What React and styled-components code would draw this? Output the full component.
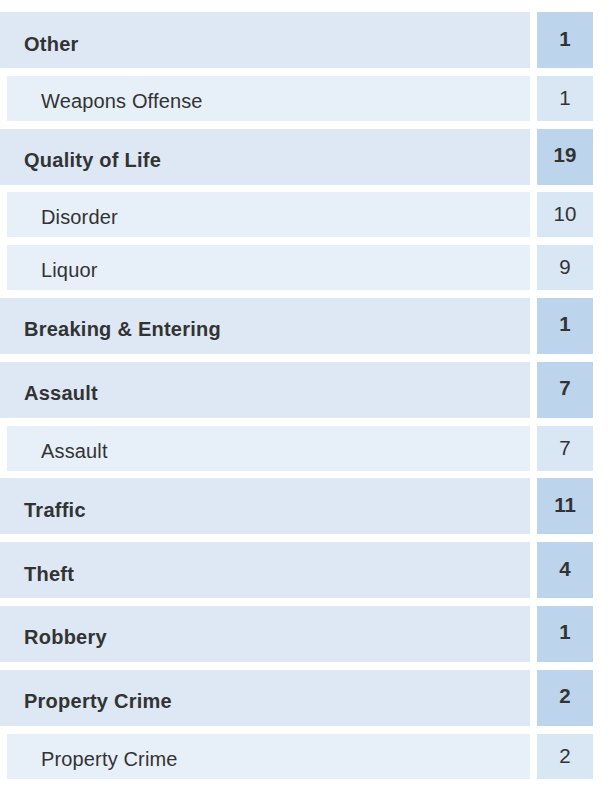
import React from "react";
import styled, { createGlobalStyle } from "styled-components";

const GlobalStyle = createGlobalStyle`
  body {
    margin: 0;
    background: #ffffff;
    font-family: "Liberation Sans", Helvetica, Arial, sans-serif;
    color: #333333;
  }
`;

const List = styled.div`
  width: 593px;
  padding-top: 12px;
  padding-bottom: 16px;
  display: flex;
  flex-direction: column;
  gap: 7.8px;
`;

const Row = styled.div`
  display: grid;
  grid-template-columns: 1fr 56px;
  column-gap: 7px;
  height: ${(p) => (p.sub ? "45px" : "56px")};
  padding-left: ${(p) => (p.sub ? "7px" : "0")};
`;

const Label = styled.div`
  display: flex;
  align-items: center;
  padding-top: ${(p) => (p.sub ? "6px" : "8px")};
  padding-left: ${(p) => (p.sub ? "34px" : "24px")};
  background: ${(p) => (p.sub ? "#e7eff9" : "#dde8f4")};
  font-size: 20px;
  letter-spacing: ${(p) => (p.sub ? "0.15px" : "0.25px")};
  font-weight: ${(p) => (p.sub ? 400 : 700)};
  color: #333;
`;

const Count = styled.div`
  display: flex;
  align-items: center;
  justify-content: center;
  padding-bottom: ${(p) => (p.sub ? "1px" : "3px")};
  background: ${(p) => (p.sub ? "#d9e6f4" : "#bcd5ec")};
  font-size: 20.5px;
  font-weight: ${(p) => (p.sub ? 400 : 700)};
  color: #333;
`;

const data = [
  { name: "Other", count: 1 },
  { name: "Weapons Offense", count: 1, sub: true },
  { name: "Quality of Life", count: 19 },
  { name: "Disorder", count: 10, sub: true },
  { name: "Liquor", count: 9, sub: true },
  { name: "Breaking & Entering", count: 1 },
  { name: "Assault", count: 7 },
  { name: "Assault", count: 7, sub: true },
  { name: "Traffic", count: 11 },
  { name: "Theft", count: 4 },
  { name: "Robbery", count: 1 },
  { name: "Property Crime", count: 2 },
  { name: "Property Crime", count: 2, sub: true },
];

export default function App() {
  return (
    <>
      <GlobalStyle />
      <List>
        {data.map((d, i) => (
          <Row key={i} sub={d.sub}>
            <Label sub={d.sub}>{d.name}</Label>
            <Count sub={d.sub}>{d.count}</Count>
          </Row>
        ))}
      </List>
    </>
  );
}
